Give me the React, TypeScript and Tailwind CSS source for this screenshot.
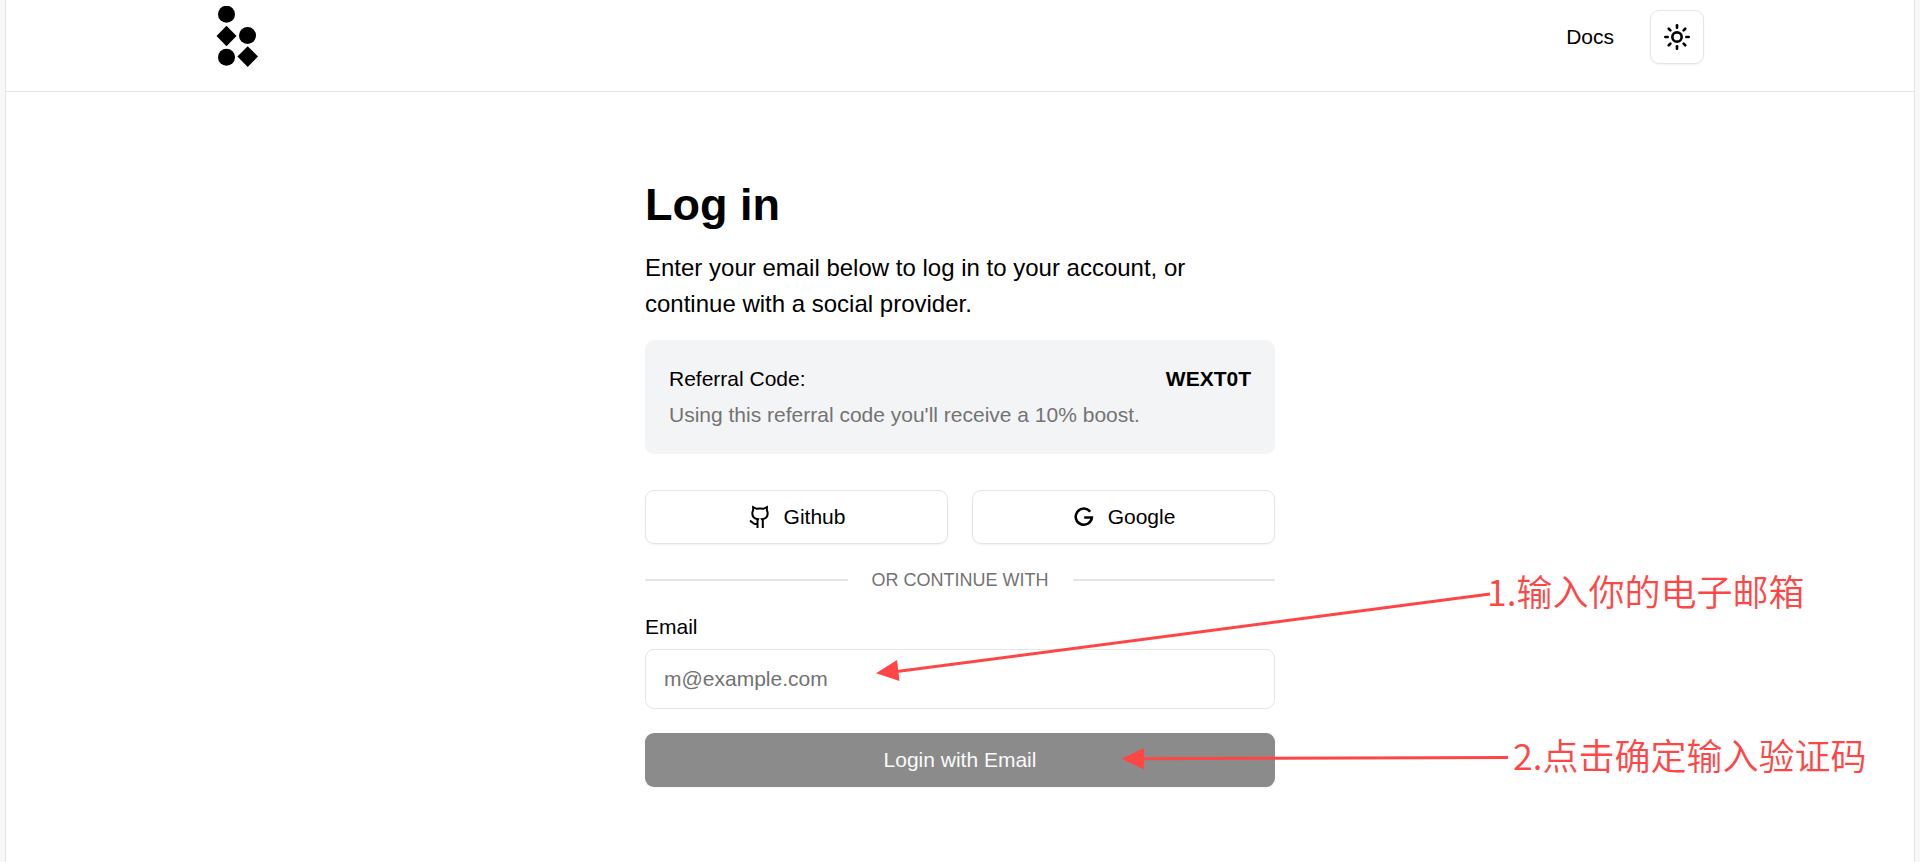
import { useState } from "react";
import { Sun } from "lucide-react";

function Logo() {
  return (
    <svg width="42" height="62" viewBox="0 0 42 62" fill="currentColor" aria-hidden="true">
      <circle cx="10.5" cy="8.2" r="8.5" />
      <path d="M10.5 19.7 20.5 29.9 10.5 40.2 .5 29.9z" />
      <circle cx="31.5" cy="29.4" r="8.5" />
      <circle cx="10.5" cy="51.2" r="8.5" />
      <path d="M31.7 40.2 42 50.6 31.7 60.9 21.4 50.6z" />
    </svg>
  );
}

function GithubIcon() {
  return (
    <svg
      width="24"
      height="24"
      viewBox="0 0 24 24"
      fill="none"
      stroke="currentColor"
      strokeWidth="2"
      aria-hidden="true"
    >
      <path d="M9.500 23v-7.500l.6-1.300C6.500 14 4.300 12.300 4.300 8.300c0-1.200.3-2.100.8-2.700V2.200l3.400 1.600c2.300-.5 4.700-.5 7 0l3.400-1.600v3.400c.5.6.8 1.500.8 2.700 0 4-2.200 5.700-5.800 5.900l.9 1.300V23" />
      <path d="M1.800 16c2.700.3 3 3 5.200 3h2.500" />
    </svg>
  );
}

function GoogleIcon() {
  return (
    <svg
      width="24"
      height="24"
      viewBox="0 0 24 24"
      fill="none"
      stroke="currentColor"
      strokeWidth="2.5"
      aria-hidden="true"
    >
      <path d="M18.2 6.7A8.1 8.1 0 1 0 19.9 12.4h-7.7" />
    </svg>
  );
}

const outlineButton =
  "flex h-[54px] items-center justify-center gap-3 rounded-[9px] border border-[#e5e5e5] bg-white shadow-xs hover:bg-gray-50";

export default function App() {
  const [email, setEmail] = useState("");

  return (
    <div className="min-h-screen bg-[#f7f8f8] px-[5px] font-['Liberation_Sans',Arial,sans-serif] text-[21px] text-black">
      <div className="min-h-screen overflow-x-clip border-x border-[#e5e5e5] bg-white">
        {/* Header */}
        <header className="border-b border-[#e5e5e5] pt-[10px] pb-[27px]">
          <div className="mx-auto flex h-[54px] max-w-[1536px] items-center justify-between px-6">
            <a href="/" aria-label="Home">
              <Logo />
            </a>
            <nav className="flex items-center gap-9">
              <a href="/docs">Docs</a>
              <button
                type="button"
                aria-label="Toggle theme"
                className="flex size-[54px] items-center justify-center rounded-[9px] border border-[#e5e5e5] bg-white shadow-xs"
              >
                <Sun size={28} strokeWidth={2.25} />
              </button>
            </nav>
          </div>
        </header>

        {/* Login form */}
        <main className="relative mx-auto max-w-[630px] pt-[86px] pb-[75px]">
          <h1 className="text-[45px] leading-[54px] font-bold">Log in</h1>
          <p className="mt-[18px] text-2xl leading-9">
            Enter your email below to log in to your account, or continue with a
            social provider.
          </p>

          <div className="mt-[18px] rounded-[9px] bg-[#f3f4f6] px-6 py-[21px] leading-9">
            <div className="flex justify-between">
              <span>Referral Code:</span>
              <span className="font-bold">WEXT0T</span>
            </div>
            <p className="text-[#737373]">
              Using this referral code you'll receive a 10% boost.
            </p>
          </div>

          <div className="mt-9 grid grid-cols-2 gap-6">
            <button type="button" className={outlineButton}>
              <GithubIcon />
              Github
            </button>
            <button type="button" className={outlineButton}>
              <GoogleIcon />
              Google
            </button>
          </div>

          <div className="mt-6 flex items-center gap-6 text-lg leading-6 text-[#737373]">
            <div className="h-[2px] flex-1 bg-[#e5e5e5]" />
            <span className="uppercase">Or continue with</span>
            <div className="h-[2px] flex-1 bg-[#e5e5e5]" />
          </div>

          <form className="mt-6" onSubmit={(e) => e.preventDefault()}>
            <label htmlFor="email" className="block leading-[21px]">
              Email
            </label>
            <input
              id="email"
              type="email"
              placeholder="m@example.com"
              value={email}
              onChange={(e) => setEmail(e.target.value)}
              className="mt-3 block h-[60px] w-full rounded-[9px] border border-[#e5e5e5] bg-white px-[18px] placeholder:text-[#737373]"
            />
            <button
              type="submit"
              className="mt-6 h-[54px] w-full rounded-[9px] bg-[#8b8b8b] text-[#fafafa] shadow-xs"
            >
              Login with Email
            </button>
          </form>

          {/* Step notes over the form */}
          <svg
            className="pointer-events-none absolute top-[488px] left-[220px]"
            width="660"
            height="200"
            viewBox="0 0 660 200"
            fill="#ff4646"
            stroke="#ff4646"
            aria-hidden="true"
          >
            <path d="M32 91.5 625 14" strokeWidth="3" />
            <path d="M11 93.3 32 80 34.5 101z" stroke="none" />
            <path d="M278 178.7 643 177.5" strokeWidth="3" />
            <path d="M256.5 178.7 279 168V189.4z" stroke="none" />
          </svg>
          <p className="absolute top-[471px] left-[842px] font-['Noto_Sans_CJK_SC',sans-serif] text-4xl leading-[54px] font-[350] whitespace-nowrap text-[#ff4646]">
            1.输入你的电子邮箱
          </p>
          <p className="absolute top-[635px] left-[868px] font-['Noto_Sans_CJK_SC',sans-serif] text-4xl leading-[54px] font-[350] whitespace-nowrap text-[#ff4646]">
            2.点击确定输入验证码
          </p>
        </main>
      </div>
    </div>
  );
}
